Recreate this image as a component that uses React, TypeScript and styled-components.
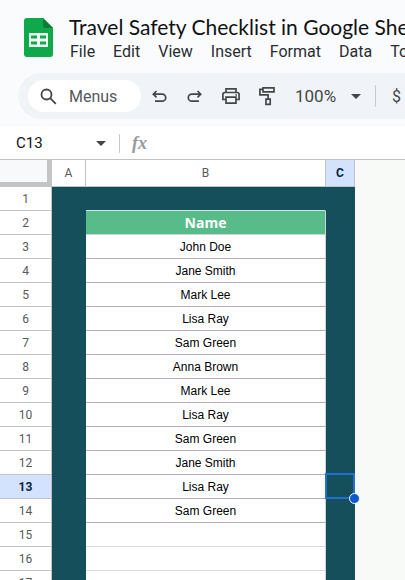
import React from 'react';
import styled, { createGlobalStyle } from 'styled-components';

const GlobalStyle = createGlobalStyle`
  * { box-sizing: border-box; }
  body { margin: 0; background: #f9fbfd; font-family: Roboto, "Liberation Sans", sans-serif; }
  button, input { font: inherit; color: inherit; border: 0; padding: 0; background: none; }
`;

const Page = styled.div`
  display: flex;
  flex-direction: column;
  height: 100vh;
  overflow: hidden;
`;

const Header = styled.header`
  display: flex;
  gap: 16px;
  padding: 14px 0 0 24px;
  height: 73px;
  white-space: nowrap;
`;

const LogoLink = styled.a`
  flex: none;
  display: block;
  width: 29px;
  height: 39px;
  margin-top: 4px;
  svg { display: block; }
`;

const Title = styled.h1`
  margin: 0;
  font: 400 21px/25px Lato, sans-serif;
  color: #101214;
`;

const MenuBar = styled.nav`
  display: flex;
  gap: 18px;
  padding-left: 1px;
`;

const MenuItem = styled.button`
  font-size: 16px;
  line-height: 26px;
  color: #2a2d30;
`;

const Toolbar = styled.div`
  flex: none;
  display: flex;
  align-items: center;
  height: 46px;
  margin: 0 0 8px 18px;
  padding-left: 10px;
  border-radius: 23px 0 0 23px;
  background: #f0f4f9;
  color: #444746;
  overflow: hidden;
`;

const SearchPill = styled.button`
  && { background: #fff; }
  flex: none;
  display: flex;
  align-items: center;
  gap: 12px;
  width: 113px;
  height: 32px;
  padding-left: 12px;
  border-radius: 16px;
  font-size: 16px;
  color: #55585a;
  svg { display: block; }
`;

const ToolButton = styled.button`
  flex: none;
  display: grid;
  place-items: center;
  width: 36px;
  height: 32px;
  svg { display: block; }
`;

const ToolGroup = styled.div`
  display: flex;
  flex: none;
`;

const Zoom = styled.button`
  flex: none;
  display: flex;
  align-items: center;
  justify-content: space-between;
  width: 66px;
  margin: 0 14px 0 10px;
  font-size: 17px;
`;

const Divider = styled.span<{ $height: number }>`
  flex: none;
  width: 1px;
  height: ${(p) => p.$height}px;
  background: #c7c9cc;
`;

const Currency = styled.button`
  flex: none;
  margin-left: 16px;
  font-size: 16px;
`;

const FormulaBar = styled.div`
  flex: none;
  display: flex;
  align-items: center;
  height: 33px;
  padding-left: 16px;
  background: #fff;
  border-bottom: 1px solid #c0c3c5;
  color: #444746;
`;

const NameBox = styled.input`
  && { color: #101214; }
  width: 67px;
  font-size: 15px;
`;

const Fx = styled.label`
  display: flex;
  width: 18px;
  margin-left: 12px;
  font: italic 700 18px/20px "Liberation Serif", serif;
  color: #97999b;
`;

const FormulaInput = styled.input`
  flex: 1;
  min-width: 0;
  margin-left: 10px;
`;

const SheetArea = styled.main`
  flex: 1;
  min-height: 0;
  overflow: hidden;
  background: #f8faf8;
`;

const Sheet = styled.table`
  table-layout: fixed;
  width: 355px;
  border-collapse: separate;
  border-spacing: 0;
  background: #fff;
`;

const Col = styled.col<{ $width: number }>`
  width: ${(p) => p.$width}px;
`;

const Corner = styled.td`
  padding: 0;
  border: solid #c4c4c4;
  border-width: 0 5px 5px 0;
  background: #f8f9fa;
`;

const ColumnHead = styled.th<{ $active?: boolean }>`
  height: 27px;
  padding: 0;
  border: solid #c0c3c5;
  border-width: 0 1px 1px 0;
  font-size: 12px;
  font-weight: ${(p) => (p.$active ? 700 : 400)};
  color: ${(p) => (p.$active ? '#0b2347' : '#575a5c')};
  background: ${(p) => (p.$active ? '#d3e3fd' : '#fff')};
`;

const RowHead = styled.th<{ $active?: boolean }>`
  height: 24px;
  padding: 0;
  border: solid #c0c3c5;
  border-width: 0 1px 1px 0;
  font-size: 12px;
  line-height: 20px;
  font-weight: ${(p) => (p.$active ? 700 : 400)};
  color: ${(p) => (p.$active ? '#0b2347' : '#575a5c')};
  background: ${(p) => (p.$active ? '#d3e3fd' : '#fff')};
`;

const SideCell = styled.td<{ $selected?: boolean }>`
  position: relative;
  z-index: ${(p) => (p.$selected ? 1 : 0)};
  padding: 0;
  background: #154f5c;
`;

type Kind = 'top' | 'title' | 'name' | 'blank';

const fills: Record<Kind, string> = { top: '#154f5c', title: '#57bb8a', name: '#fff', blank: '#fff' };
const lines: Record<Kind, string> = { top: '#d5e6e4', title: '#c9d6d0', name: '#c0a9b0', blank: '#d3d9dc' };

const Cell = styled.td<{ $kind: Kind }>`
  padding: 0;
  border-bottom: 1px solid ${(p) => lines[p.$kind]};
  border-right: 1px solid ${(p) => (p.$kind === 'top' ? '#154f5c' : '#c5d5d8')};
  background: ${(p) => fills[p.$kind]};
  text-align: center;
  color: ${(p) => (p.$kind === 'title' ? '#fff' : '#000')};
  font: ${(p) =>
    p.$kind === 'title'
      ? '700 14px/20px "Open Sans", sans-serif'
      : '400 12px/20px "Liberation Sans", sans-serif'};
`;

const Selection = styled.span`
  position: absolute;
  inset: -2px 0 0 -1px;
  border: 2px solid #1f6fd0;
`;

const FillHandle = styled.span`
  position: absolute;
  right: -5px;
  bottom: -5px;
  width: 11px;
  height: 11px;
  border: 1px solid #fff;
  border-radius: 50%;
  background: #0b57d0;
`;

const SheetsLogo = () => (
  <svg width="29" height="39" viewBox="0 0 29 39">
    <path d="M3 0h16l10 10v26a3 3 0 0 1-3 3H3a3 3 0 0 1-3-3V3a3 3 0 0 1 3-3z" fill="#0fa84a" />
    <path d="M19 0l10 10h-8a2 2 0 0 1-2-2z" fill="#0c7c38" />
    <path d="M5 15h19v14H5z" fill="#f1faf3" />
    <path d="M7 17.500h6v3H7zM16 17.500h6v3h-6zM7 23.500h6v3H7zM16 23.500h6v3h-6z" fill="#0fa84a" />
  </svg>
);

const SearchIcon = () => (
  <svg width="17" height="17" viewBox="0 0 17 17" fill="none" stroke="#444746" strokeWidth="1.800">
    <circle cx="6.500" cy="6.500" r="5" />
    <path d="M10.200 10.200l5.600 5.600" />
  </svg>
);

const TurnIcon = ({ flip }: { flip?: boolean }) => (
  <svg width="16" height="16" viewBox="0 0 16 16" fill="none" stroke="currentColor" strokeWidth="1.700">
    <g transform={flip ? 'matrix(-1 0 0 1 16 0)' : undefined}>
      <path d="M5.500 3L2.300 6.200l3.200 3.200M2.500 6.200h8.700a3.500 3.500 0 0 1 0 7H4" />
    </g>
  </svg>
);

const PrintIcon = () => (
  <svg width="20" height="18" viewBox="0 0 20 18" fill="none" stroke="currentColor" strokeWidth="1.700">
    <path d="M5 5.500V1.900h10v3.600M5 12.500H1.900V7.500a2 2 0 0 1 2-2h12.200a2 2 0 0 1 2 2v5H15" />
    <path d="M5 10.200h10v5.900H5z" />
    <path d="M14.500 8h1.500" />
  </svg>
);

const PaintIcon = () => (
  <svg width="18" height="20" viewBox="0 0 18 20" fill="none" stroke="currentColor" strokeWidth="1.700">
    <path d="M5 1.900h11v3.900H5zM5 3.300H1.900v5.600h8.200v4.300M8 13.200h4.200v5.100H8z" />
  </svg>
);

const Caret = () => (
  <svg width="10" height="5" viewBox="0 0 10 5">
    <path d="M0 0h10L5 5z" fill="#444746" />
  </svg>
);

const menus = ['File', 'Edit', 'View', 'Insert', 'Format', 'Data', 'Tools'];

const people = [
  'John Doe', 'Jane Smith', 'Mark Lee', 'Lisa Ray', 'Sam Green', 'Anna Brown',
  'Mark Lee', 'Lisa Ray', 'Sam Green', 'Jane Smith', 'Lisa Ray', 'Sam Green',
];

const rows: { kind: Kind; text: string }[] = [
  { kind: 'top', text: '' },
  { kind: 'title', text: 'Name' },
  ...people.map((text) => ({ kind: 'name' as Kind, text })),
  ...[15, 16, 17].map(() => ({ kind: 'blank' as Kind, text: '' })),
];

const ACTIVE_ROW = 13;

export default function App() {
  return (
    <Page>
      <GlobalStyle />
      <Header>
        <LogoLink href="#" aria-label="Sheets home"><SheetsLogo /></LogoLink>
        <div>
          <Title>Travel Safety Checklist in Google Sheets</Title>
          <MenuBar>
            {menus.map((m) => <MenuItem key={m}>{m}</MenuItem>)}
          </MenuBar>
        </div>
      </Header>
      <Toolbar>
        <SearchPill><SearchIcon />Menus</SearchPill>
        <ToolGroup>
          <ToolButton aria-label="Undo"><TurnIcon /></ToolButton>
          <ToolButton aria-label="Redo"><TurnIcon flip /></ToolButton>
          <ToolButton aria-label="Print"><PrintIcon /></ToolButton>
          <ToolButton aria-label="Paint format"><PaintIcon /></ToolButton>
        </ToolGroup>
        <Zoom aria-label="Zoom">100%<Caret /></Zoom>
        <Divider $height={22} />
        <Currency aria-label="Format as currency">$</Currency>
      </Toolbar>
      <FormulaBar>
        <NameBox aria-label="Name box" defaultValue="C13" />
        <ToolButton aria-label="Named ranges"><Caret /></ToolButton>
        <Divider $height={19} />
        <Fx htmlFor="formula">fx</Fx>
        <FormulaInput id="formula" />
      </FormulaBar>
      <SheetArea>
        <Sheet>
          <colgroup>
            <Col $width={52} /><Col $width={34} /><Col $width={240} /><Col $width={29} />
          </colgroup>
          <thead>
            <tr>
              <Corner />
              <ColumnHead scope="col">A</ColumnHead>
              <ColumnHead scope="col">B</ColumnHead>
              <ColumnHead scope="col" $active>C</ColumnHead>
            </tr>
          </thead>
          <tbody>
            {rows.map(({ kind, text }, i) => (
              <tr key={i}>
                <RowHead scope="row" $active={i + 1 === ACTIVE_ROW}>{i + 1}</RowHead>
                <SideCell />
                <Cell $kind={kind}>{text}</Cell>
                <SideCell $selected={i + 1 === ACTIVE_ROW}>
                  {i + 1 === ACTIVE_ROW && <><Selection /><FillHandle /></>}
                </SideCell>
              </tr>
            ))}
          </tbody>
        </Sheet>
      </SheetArea>
    </Page>
  );
}
